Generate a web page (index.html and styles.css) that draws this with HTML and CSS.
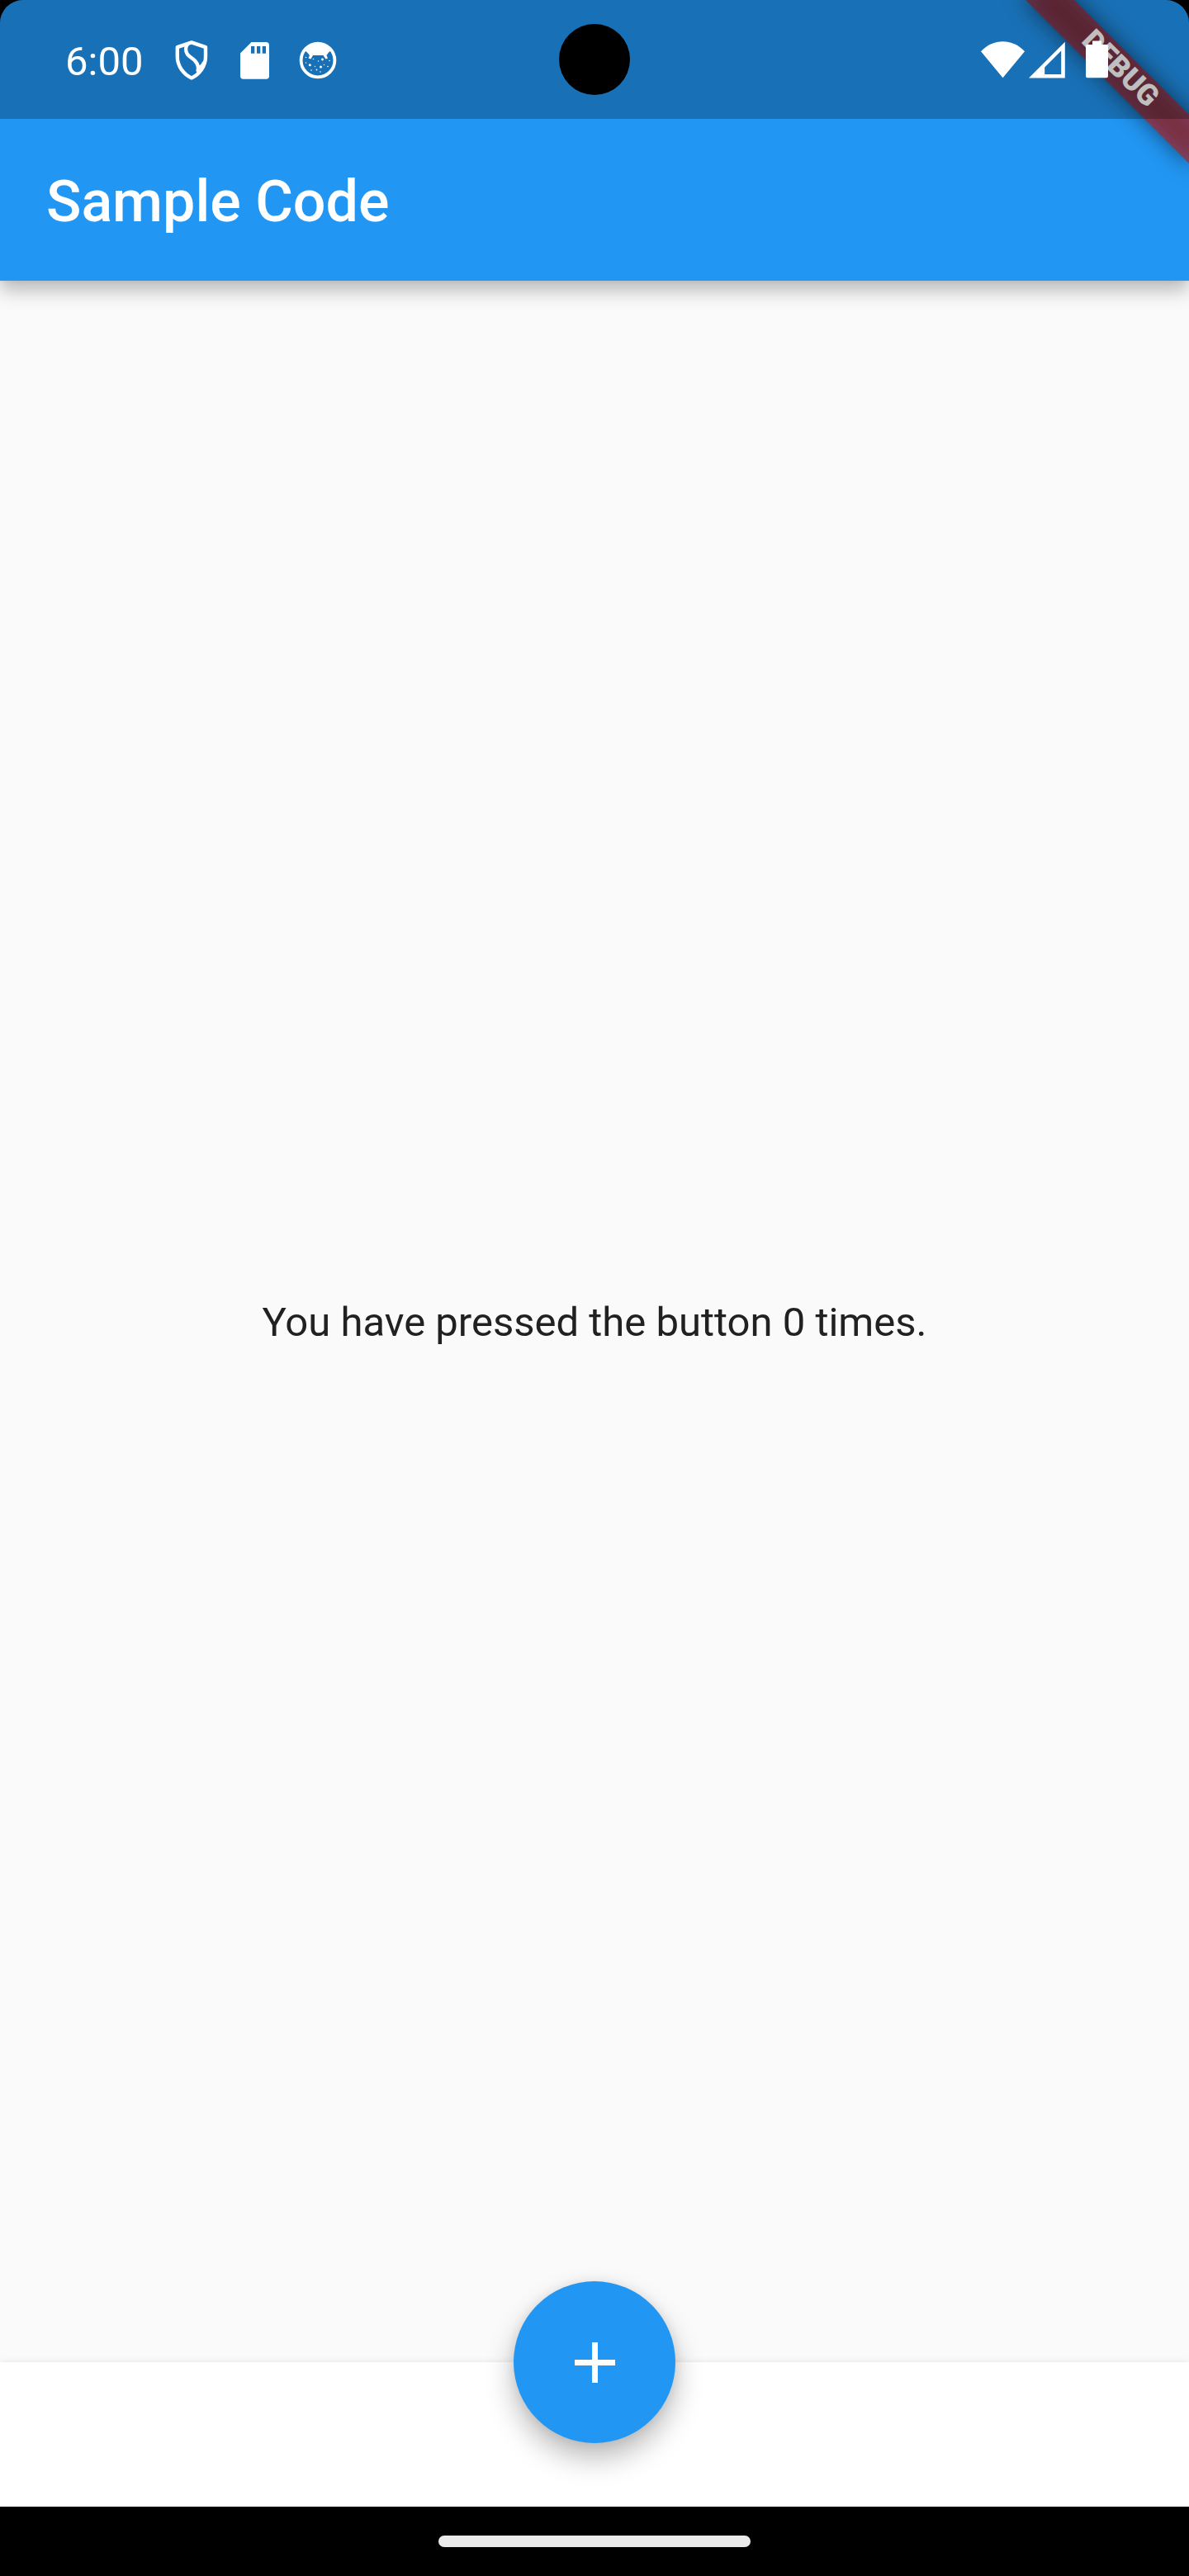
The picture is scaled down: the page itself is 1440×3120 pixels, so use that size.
FILE: index.html
```html
<!DOCTYPE html>
<html lang="en">
<head>
<meta charset="utf-8">
<title>Sample Code</title>
<link rel="stylesheet" href="styles.css">
</head>
<body>
<div class="screen">
  <div class="top">
    <div class="status">
      <div class="status-left">
        <span class="clock">6:00</span>
        <svg class="shield" width="40" height="48" viewBox="0 0 40 48" fill="none" stroke="#fff" stroke-width="4.4" stroke-linejoin="round">
          <path d="M20 2.400L37 8.200V20C37 31 29.500 41 20 45.400C10.500 41 2.800 31 2.800 20V8.200Z"/>
          <path d="M15.500 4C12.500 7.500 12.300 12.500 15 16.800C17.200 20 21.500 21.300 24.500 25C28 29 29 32.500 27.500 38"/>
          <path d="M35.500 24C34 31 31 36 26 42L28 30Q31 31 33 26Z" fill="#fff" stroke="none"/>
        </svg>
        <svg class="sd" width="35" height="45" viewBox="0 0 35 45">
          <path fill="#fff" fill-rule="evenodd" d="M13.500 0H31Q35 0 35 4V41Q35 44.700 31.500 44.700H3.500Q0 44.700 0 41V13.500ZM13 5V13.700H17.300V5ZM20 5V13.700H24.300V5ZM26.700 5V13.700H31V5Z"/>
        </svg>
        <svg class="face" width="46" height="46" viewBox="0 0 46 46">
          <circle cx="23" cy="23" r="20.400" fill="none" stroke="#fff" stroke-width="3.800"/>
          <path fill="#fff" d="M7 11C11 5 16 2 23 2S35 5 39 11L36 13.500L33.500 17L35 20.500L32.500 21.500L29.500 17H17L14.500 21.500L11.500 20.500L13 17L10 13.500Z"/>
          <g fill="#fff">
            <circle cx="28.500" cy="22" r="1.400"/><circle cx="13.300" cy="28.800" r="1.500"/><circle cx="26.500" cy="31" r="1.500"/>
            <circle cx="8.500" cy="19.500" r=".8"/><circle cx="17.500" cy="21.500" r=".8"/><circle cx="23.500" cy="24" r=".7"/>
            <circle cx="37" cy="23.500" r=".8"/><circle cx="8.500" cy="26" r=".7"/><circle cx="19.500" cy="30.500" r=".7"/>
            <circle cx="30.500" cy="28.500" r=".7"/><circle cx="35" cy="30.500" r=".8"/><circle cx="15" cy="35" r=".8"/>
            <circle cx="21.500" cy="34.500" r=".9"/><circle cx="26" cy="37" r=".8"/>
          </g>
        </svg>
      </div>
      <div class="status-right">
        <svg class="wifi" width="53" height="45" viewBox="0 0 53 45"><path fill="#fff" d="M0 12.200C7.500 4 17 .2 26.500 .2S45.500 4 53 12.200L26.500 44.200Z"/></svg>
        <svg class="signal" width="45" height="45" viewBox="0 0 45 45"><path fill="#fff" fill-rule="evenodd" d="M43.800 .8V44.600H0ZM39.200 11.500L19.200 31.500V40H39.200Z"/></svg>
        <svg class="battery" width="27" height="46" viewBox="0 0 27 46"><path fill="#fff" d="M8 .5H19V5H25Q27 5 27 7V43Q27 45.300 25 45.300H2Q0 45.300 0 43V7Q0 5 2 5H8Z"/></svg>
      </div>
      <div class="camera"></div>
    </div>
    <header class="appbar"><h1>Sample Code</h1></header>
    <div class="banner"><span>DEBUG</span></div>
    <div class="scrim"></div>
  </div>
  <main class="content"><p>You have pressed the button 0 times.</p></main>
  <footer class="bottombar">
    <button class="fab" aria-label="Increment">
      <svg width="49" height="49" viewBox="0 0 49 49"><path fill="#fff" d="M21 0h7v21h21v7H28v21h-7V28H0v-7h21z"/></svg>
    </button>
  </footer>
  <nav class="sysnav"><div class="pill"></div></nav>
</div>
</body>
</html>
```
FILE: styles.css
```css
body {
  margin: 0;
  background: #000;
  font-family: Roboto, "Liberation Sans", sans-serif;
}

.screen {
  display: flex;
  flex-direction: column;
  width: 1440px;
  height: 3120px;
  overflow: hidden;
  border-radius: 28px 28px 0 0;
}

.top {
  position: relative;
  z-index: 1;
  height: 340px;
  background: #2196f3;
  box-shadow: 0 12px 21px rgba(0, 0, 0, 0.25), 0 0 5px rgba(0, 0, 0, 0.07);
}

.status {
  position: relative;
  z-index: 3;
  display: flex;
  justify-content: space-between;
  box-sizing: border-box;
  height: 144px;
  padding: 0 98px 0 79px;
}

.scrim {
  position: absolute;
  inset: 0 0 auto;
  z-index: 2;
  height: 144px;
  background: rgba(0, 0, 0, 0.25);
}

.status-left,
.status-right {
  display: flex;
  align-items: flex-start;
}

.status svg {
  display: block;
}

.clock {
  width: 133px;
  margin-top: 46px;
  color: #fff;
  font-size: 49px;
  line-height: 58px;
}

.shield {
  margin: 49px 39px 0 0;
}

.sd {
  margin: 51px 36px 0 0;
}

.face {
  margin-top: 50px;
}

.wifi {
  margin: 50px 5px 0 0;
}

.signal {
  margin: 50px 24px 0 0;
}

.battery {
  margin-top: 49px;
}

.camera {
  position: absolute;
  top: 29px;
  left: 677px;
  width: 86px;
  height: 86px;
  border-radius: 50%;
  background: #000;
}

.appbar {
  display: flex;
  align-items: center;
  height: 196px;
  padding-left: 56px;
}

.appbar h1 {
  margin: 4px 0 0;
  color: #fff;
  font-size: 70px;
  font-weight: 500;
  line-height: 82px;
}

/* Ribbon turned about the top right corner of the window */
.banner {
  position: absolute;
  top: 98px;
  left: 1300px;
  z-index: 1;
  width: 280px;
  height: 42px;
  transform: rotate(45deg);
  transform-origin: 140px -98px;
}

.banner::before {
  content: "";
  position: absolute;
  inset: 0;
  background: rgba(0, 0, 0, 0.5);
  filter: blur(13.9px);
}

.banner span {
  position: relative;
  display: block;
  height: 42px;
  background: rgba(183, 28, 28, 0.627);
  color: #fff;
  font-size: 35.7px;
  font-weight: 900;
  line-height: 39px;
  text-align: center;
}

.content {
  display: flex;
  align-items: center;
  justify-content: center;
  height: 2521px;
  background: #fafafa;
}

.content p {
  margin: 2px 0 0;
  color: #212121;
  font-size: 49px;
  line-height: 70px;
}

.bottombar {
  position: relative;
  height: 175px;
  background: #fff;
  box-shadow: 0 0 8px rgba(0, 0, 0, 0.09);
}

.fab {
  position: absolute;
  top: -98px;
  left: 622px;
  display: flex;
  align-items: center;
  justify-content: center;
  width: 196px;
  height: 196px;
  padding: 0;
  border: 0;
  border-radius: 50%;
  background: #2196f3;
  box-shadow: 0 18px 34px rgba(0, 0, 0, 0.27), 0 0 14px rgba(0, 0, 0, 0.08);
}

.sysnav {
  display: flex;
  align-items: center;
  justify-content: center;
  height: 84px;
  background: #000;
}

.pill {
  width: 378px;
  height: 14px;
  border-radius: 7px;
  background: #ebebeb;
}
```
